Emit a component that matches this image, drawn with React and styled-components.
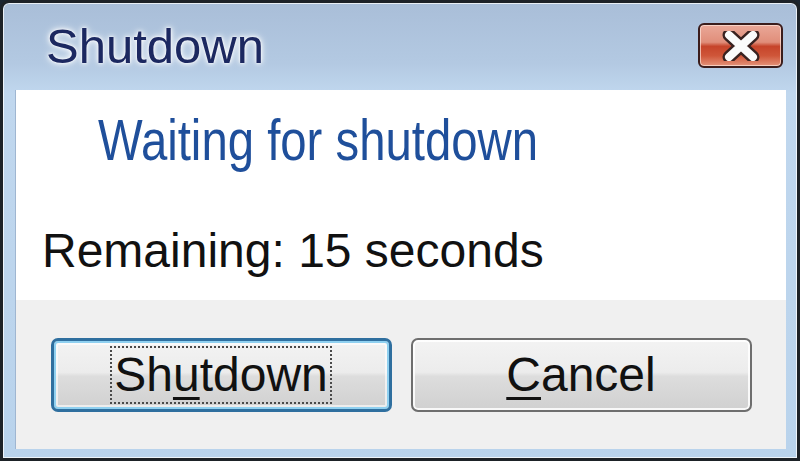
import React from "react";
import styled, { createGlobalStyle } from "styled-components";

const GlobalStyle = createGlobalStyle`
  html, body {
    margin: 0;
    padding: 0;
    background: #1b2530;
  }
  * { box-sizing: border-box; }
`;

const Window = styled.div`
  width: 800px;
  height: 461px;
  display: flex;
  flex-direction: column;
  border: 3px solid #1d2227;
  border-radius: 9px 9px 0 0;
  background: linear-gradient(180deg, #a9bed8 0px, #b3c9e2 60px, #c0d7ee 90px, #b9d3ec 100%);
  box-shadow: inset 0 0 0 1px rgba(255, 255, 255, 0.75);
  overflow: hidden;
  font-family: "Liberation Sans", Arial, sans-serif;
`;

const TitleBar = styled.div`
  height: 87px;
  flex: none;
  display: flex;
  align-items: flex-start;
  justify-content: space-between;
  padding: 0 14px 0 43px;
`;

const Title = styled.div`
  font-size: 49px;
  line-height: 49px;
  margin-top: 19px;
  color: #1c2860;
  text-shadow: 0 0 2px #fff, 0 0 5px #fff, 0 0 9px rgba(255, 255, 255, 0.9);
`;

const CloseButton = styled.div`
  width: 85px;
  height: 45px;
  margin-top: 20px;
  display: flex;
  align-items: center;
  justify-content: center;
  border: 2px solid #3b1d1c;
  border-radius: 6px;
  background: linear-gradient(
    180deg,
    #eaa898 0%,
    #e08e7a 42%,
    #c6442a 52%,
    #cf5639 75%,
    #e4937a 100%
  );
  box-shadow: inset 0 0 0 1px rgba(255, 230, 220, 0.7);
`;

const Client = styled.div`
  flex: 1;
  display: flex;
  flex-direction: column;
  margin: 0 11px 9px 12px;
  border-left: 1px solid #9fb6d1;
  background: #fff;
`;

const Body = styled.div`
  height: 210px;
  flex: none;
  background: #fff;
  padding: 22px 0 0 24px;
`;

const Heading = styled.div`
  font-size: 57px;
  line-height: 57px;
  color: #1f4f9b;
  padding-left: 58px;
  white-space: nowrap;
  span {
    display: inline-block;
    transform: scaleX(0.83);
    transform-origin: left center;
  }
`;

const Message = styled.div`
  margin-top: 58px;
  font-size: 48px;
  line-height: 48px;
  color: #111;
  white-space: nowrap;
  padding-left: 2px;
`;

const Footer = styled.div`
  flex: 1;
  display: flex;
  align-items: center;
  justify-content: center;
  gap: 19px;
  background: #f0f0f0;
`;

const Button = styled.div`
  width: 341px;
  height: 74px;
  display: flex;
  align-items: center;
  justify-content: center;
  border-radius: 7px;
  border: ${(p) => (p.$default ? "3px solid #2f6f9f" : "2px solid #6e6e6e")};
  background: linear-gradient(180deg, #f3f3f3 0%, #ececec 46%, #dddddd 52%, #d0d0d0 100%);
  box-shadow: ${(p) =>
    p.$default
      ? "inset 0 0 0 2px #8fd0f0, inset 0 0 0 4px rgba(255,255,255,0.6)"
      : "inset 0 0 0 2px rgba(255,255,255,0.85)"};
  font-size: 48px;
  color: #111;
  u {
    text-decoration-thickness: 3px;
    text-underline-offset: 6px;
  }
`;

const FocusRing = styled.span`
  display: inline-block;
  line-height: 54px;
  padding: 0 2px;
  border: 2px dotted #4a4a4a;
`;

const CloseIcon = () => (
  <svg width="40" height="30" viewBox="0 0 40 30">
    <path
      d="M8 4 L32 26 M32 4 L8 26"
      stroke="#3a2220"
      strokeWidth="13"
      strokeLinecap="round"
    />
    <path
      d="M8 4 L32 26 M32 4 L8 26"
      stroke="#fbfbfb"
      strokeWidth="8"
      strokeLinecap="round"
    />
  </svg>
);

export default function App() {
  return (
    <>
      <GlobalStyle />
      <Window>
        <TitleBar>
          <Title>Shutdown</Title>
          <CloseButton>
            <CloseIcon />
          </CloseButton>
        </TitleBar>
        <Client>
          <Body>
            <Heading>
              <span>Waiting for shutdown</span>
            </Heading>
            <Message>Remaining: 15 seconds</Message>
          </Body>
          <Footer>
            <Button $default>
              <FocusRing>
                Sh<u>u</u>tdown
              </FocusRing>
            </Button>
            <Button>
              <span>
                <u>C</u>ancel
              </span>
            </Button>
          </Footer>
        </Client>
      </Window>
    </>
  );
}
